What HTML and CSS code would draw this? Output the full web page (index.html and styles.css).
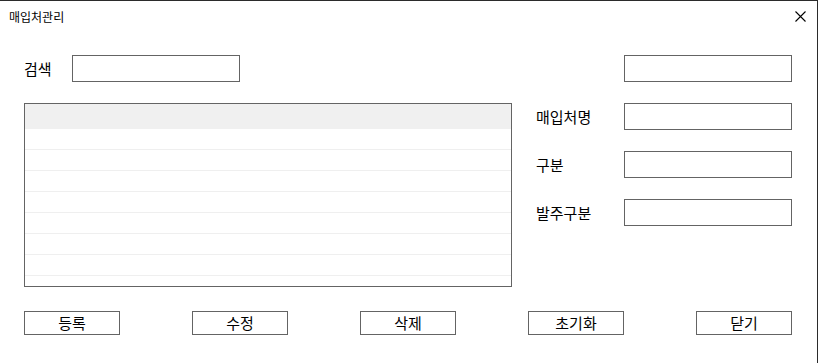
FILE: index.html
```html
<!DOCTYPE html>
<html lang="ko">
  <head>
    <meta charset="UTF-8" />
    <meta name="viewport" content="width=device-width, initial-scale=1.0" />
    <title>매입처관리</title>
    <link rel="stylesheet" href="styles.css">
  </head>
  <body>
    <div class="window">
      <div class="titlebar">
        <span class="title">매입처관리</span>
        <button class="close-button" aria-label="닫기">
          <svg width="11" height="11" viewBox="0 0 11 11">
            <path d="M0.5 0.5 L10.5 10.5 M10.5 0.5 L0.5 10.5" stroke="#000" stroke-width="1.1" fill="none" />
          </svg>
        </button>
      </div>

      <div class="main">
        <div class="left">
          <div class="search-row">
            <label for="search">검색</label>
            <input class="field" id="search" type="text" />
          </div>
          <div class="list">
            <div class="list-head"></div>
            <div class="list-row"></div>
            <div class="list-row"></div>
            <div class="list-row"></div>
            <div class="list-row"></div>
            <div class="list-row"></div>
            <div class="list-row"></div>
            <div class="list-row"></div>
          </div>
        </div>

        <div class="right">
          <div class="form-row">
            <span></span>
            <input class="field" id="code" type="text" />
          </div>
          <div class="form-row">
            <label for="name">매입처명</label>
            <input class="field" id="name" type="text" />
          </div>
          <div class="form-row">
            <label for="kind">구분</label>
            <input class="field" id="kind" type="text" />
          </div>
          <div class="form-row">
            <label for="orderKind">발주구분</label>
            <input class="field" id="orderKind" type="text" />
          </div>
        </div>
      </div>

      <div class="buttons">
        <button class="action">등록</button>
        <button class="action">수정</button>
        <button class="action">삭제</button>
        <button class="action">초기화</button>
        <button class="action">닫기</button>
      </div>
    </div>
  </body>
</html>
```

FILE: styles.css
```css
body {
  margin: 0;
  background: #fff;
  font-family: "Noto Sans CJK KR", "Noto Sans", sans-serif;
  color: #000;
}

.window {
  box-sizing: border-box;
  width: 818px;
  height: 363px;
  border-top: 1px solid #2b2b2b;
  border-right: 1px solid #2b2b2b;
  background: #fff;
}

.titlebar {
  height: 30px;
  display: flex;
  align-items: center;
  justify-content: space-between;
  padding: 0 11px 0 9px;
}
.title {
  font-size: 12px;
}
.close-button {
  border: none;
  background: none;
  padding: 0;
  width: 11px;
  height: 11px;
  display: block;
}
.close-button svg {
  display: block;
}

.main {
  display: flex;
  gap: 24px;
  padding: 24px 0 0 24px;
}

.left {
  width: 488px;
  display: grid;
  gap: 21px;
}
.search-row {
  display: grid;
  grid-template-columns: 48px 168px;
  align-items: center;
  height: 27px;
  font-size: 15px;
}

.field {
  box-sizing: border-box;
  width: 168px;
  height: 27px;
  border: 1px solid #646464;
  border-radius: 0;
  margin: 0;
  padding: 0 4px;
  font: inherit;
  font-size: 14px;
  outline: none;
}

.list {
  box-sizing: border-box;
  height: 184px;
  border: 1px solid #646464;
  overflow: hidden;
}
.list-head {
  height: 25px;
  background: #f0f0f0;
}
.list-row {
  height: 20px;
  border-bottom: 1px solid #efefef;
}

.right {
  display: grid;
  gap: 21px;
  align-content: start;
}
.form-row {
  display: grid;
  grid-template-columns: 88px 168px;
  align-items: center;
  height: 27px;
  font-size: 15px;
}

.buttons {
  display: flex;
  justify-content: space-between;
  width: 768px;
  margin: 24px 0 0 24px;
}
.action {
  box-sizing: border-box;
  width: 96px;
  height: 24px;
  border: 1px solid #646464;
  border-radius: 0;
  background: #fff;
  padding: 0;
  font: inherit;
  font-size: 15px;
  line-height: 22px;
  color: #000;
}
```
